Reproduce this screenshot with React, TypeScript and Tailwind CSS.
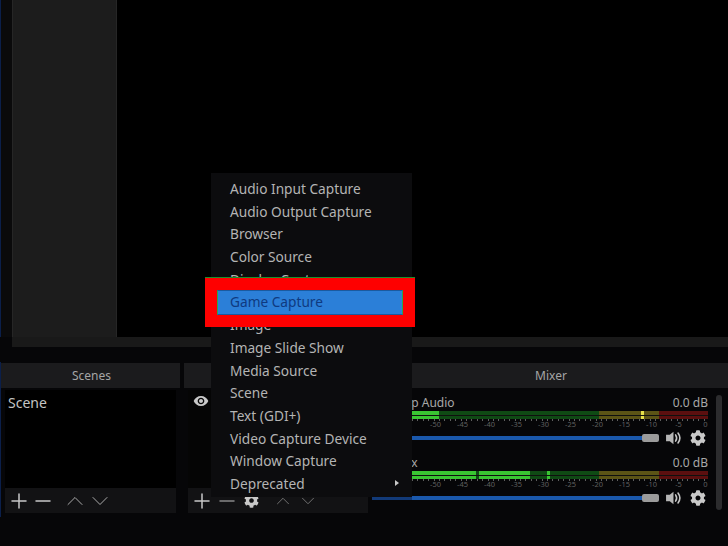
import { ChevronDown, ChevronUp, Minus, Plus } from 'lucide-react';
import { FaCog } from 'react-icons/fa';
import { MdVisibility } from 'react-icons/md';

const menuItems = [
  'Audio Input Capture',
  'Audio Output Capture',
  'Browser',
  'Color Source',
  'Display Capture',
  'Game Capture',
  'Image',
  'Image Slide Show',
  'Media Source',
  'Scene',
  'Text (GDI+)',
  'Video Capture Device',
  'Window Capture',
  'Deprecated',
];

const scale = ['-50', '-45', '-40', '-35', '-30', '-25', '-20', '-15', '-10', '-5', '0'];

type Level = { left: number; width: number; color: string };

function Speaker() {
  return (
    <svg width="18" height="16" viewBox="0 0 17 15" fill="none">
      <path d="M1 4.5h3.5L8 1.5v12l-3.500-3H1z" fill="#b5b5b5" />
      <path d="M10 4.500c1.200 1.800 1.200 4.200 0 6M12.300 2.800c2.100 2.800 2.100 6.600 0 9.400" stroke="#c4c4c4" strokeWidth="1.500" strokeLinecap="round" />
    </svg>
  );
}

function Strip({ name, levels, extendSlider }: { name: string; levels: Level[]; extendSlider?: boolean }) {
  return (
    <div className="h-[60px] flex flex-col">
      <div className="h-[15px] pr-[8px] flex items-center justify-between text-[12px] text-[#a8a8a8]">
        <span>{name}</span>
        <span>0.0 dB</span>
      </div>
      <div className="ml-[40px] w-[296px] h-[8px] mt-[1px] relative flex flex-col justify-between">
        {[0, 1].map((row) => (
          <div key={row} className="h-[3.5px] flex">
            <div className="w-[187px] bg-[#0f4a14]" />
            <div className="w-[60px] bg-[#5c5416]" />
            <div className="w-[49px] bg-[#5c0f0f]" />
          </div>
        ))}
        {levels.map((l) => (
          <div
            key={l.left}
            className="absolute top-0 bottom-0"
            style={{ left: l.left, width: l.width, backgroundColor: l.color }}
          />
        ))}
        <div className="absolute left-0 right-0 top-[3.5px] h-[1px] bg-[#10100f]" />
      </div>
      <div className="ml-[40px] w-[296px] h-[2px] bg-[repeating-linear-gradient(90deg,#5f5f5f_0,#5f5f5f_1px,transparent_1px,transparent_5.4px)]" />
      <div className="ml-[50px] flex h-[7px] items-center text-[7.5px] leading-none text-[#5f5f5f]">
        {scale.map((s) => (
          <span key={s} className="w-[27px] shrink-0 text-center">{s}</span>
        ))}
      </div>
      <div className="mt-[2px] flex items-center h-[16px]">
        {extendSlider ? <div className="w-[40px] h-[3px] bg-[#123a78]" /> : <div className="w-[40px]" />}
        <div className="w-[230px] h-[4px] bg-[#1a58ac]" />
        <div className="w-[17px] h-[8px] rounded-[2px] bg-[#9b9b9b]" />
        <div className="ml-[6px]">
          <Speaker />
        </div>
        <FaCog className="ml-[7px] text-[#c9c9c9]" size={16} />
      </div>
    </div>
  );
}

function Toolbar({ children }: { children: React.ReactNode }) {
  return <div className="mt-auto h-[25px] bg-[#121214] flex items-center text-[#c8c8c8] relative">{children}</div>;
}

export default function App() {
  return (
    <div className="w-[728px] h-[546px] relative overflow-hidden bg-[#060608] font-['Noto_Sans','Open_Sans',sans-serif]">
      {/* Preview */}
      <div className="h-[337px] flex">
        <div className="w-[1px] bg-[#0b1f4a]" />
        <div className="w-[11px] bg-[#0a0a0b]" />
        <div className="w-[105px] bg-[#1c1c1c] border-x border-[#262626]" />
        <div className="flex-1 bg-black" />
      </div>
      <div className="h-[10px] ml-[12px] bg-[#191919]" />
      <div className="h-[15px]" />

      {/* Docks */}
      <div className="h-[155px] flex gap-[4px] border-l border-[#0b1f4a]">
        <div className="w-[179px] flex flex-col">
          <div className="h-[25px] mt-[1px] bg-[#1b1b1d] flex items-center justify-center pl-[2px] text-[12px] text-[#a5a5a5]">Scenes</div>
          <div className="flex-1 mx-[4px] mt-[2px] mb-[4px] bg-black flex flex-col">
            <div className="px-[3px] pt-[2px] text-[14px] leading-[22px] text-[#c4c4c4]">Scene</div>
            <Toolbar>
              <Plus className="absolute left-[2px]" size={24} strokeWidth={1.5} />
              <Minus className="absolute left-[26px]" size={24} strokeWidth={1.5} />
              <ChevronUp className="absolute left-[56px] text-[#b5b5b5]" size={28} strokeWidth={0.8} />
              <ChevronDown className="absolute left-[81px] text-[#b5b5b5]" size={28} strokeWidth={0.8} />
            </Toolbar>
          </div>
        </div>
        <div className="w-[184px] flex flex-col">
          <div className="h-[25px] mt-[1px] bg-[#1b1b1d]" />
          <div className="flex-1 ml-[4px] mt-[2px] mb-[4px] bg-[#050505] flex flex-col">
            <div className="pl-[5px] pt-[3px] text-[#c8c8c8]">
              <MdVisibility size={16} />
            </div>
            <Toolbar>
              <Plus className="absolute left-[2px]" size={24} strokeWidth={1.5} />
              <Minus className="absolute left-[27px] text-[#888]" size={24} strokeWidth={1.5} />
              <FaCog className="absolute left-[56px] text-[#c8c8c8]" size={15} />
              <ChevronUp className="absolute left-[84px] text-[#777]" size={22} strokeWidth={1} />
              <ChevronDown className="absolute left-[109px] text-[#777]" size={22} strokeWidth={1} />
            </Toolbar>
          </div>
        </div>
        <div className="flex-1 flex flex-col">
          <div className="h-[25px] mt-[1px] bg-[#1b1b1d] flex items-center justify-center pl-[2px] text-[12px] text-[#a5a5a5]">Mixer</div>
          <div className="flex-1 mt-[7px] flex">
            <div className="w-[344px] flex flex-col">
              <Strip
                name="Desktop Audio"
                levels={[
                  { left: 0, width: 27, color: '#39c532' },
                  { left: 229, width: 3, color: '#e4e04a' },
                ]}
              />
              <Strip
                name="Mic/Aux"
                extendSlider
                levels={[
                  { left: 0, width: 64, color: '#39c532' },
                  { left: 67, width: 51, color: '#39c532' },
                  { left: 135, width: 3, color: '#39c532' },
                ]}
              />
            </div>
            <div className="w-[6px] h-[115px] rounded-[3px] bg-[#2c2c2e]" />
          </div>
        </div>
      </div>

      {/* Add source menu */}
      <div className="absolute left-[211px] top-[173px] w-[201px] h-[324px] bg-[#0c0c0e] pt-[5px] pl-[19px]">
        {menuItems.map((item) => (
          <div key={item} className="h-[22.7px] flex items-center text-[13.7px] text-[#b4b4b4]">
            {item}
          </div>
        ))}
        <div className="absolute right-[13px] bottom-[11px] w-0 h-0 border-y-[3.5px] border-y-transparent border-l-[4px] border-l-[#c8c8c8]" />
      </div>

      {/* Highlight box */}
      <div className="absolute left-[205px] top-[278px] w-[210px] h-[49px] bg-[#fe0000] p-[12px] shadow-[0_-1px_0_#1a8f2a]">
        <div className="h-[25px] bg-[#2b7fd8] border-x border-[#27a84a] border-y-[#1a5aa0] border-y pl-[12px] flex items-center text-[13.7px] text-[#0f3a80]">
          Game Capture
        </div>
      </div>
    </div>
  );
}
